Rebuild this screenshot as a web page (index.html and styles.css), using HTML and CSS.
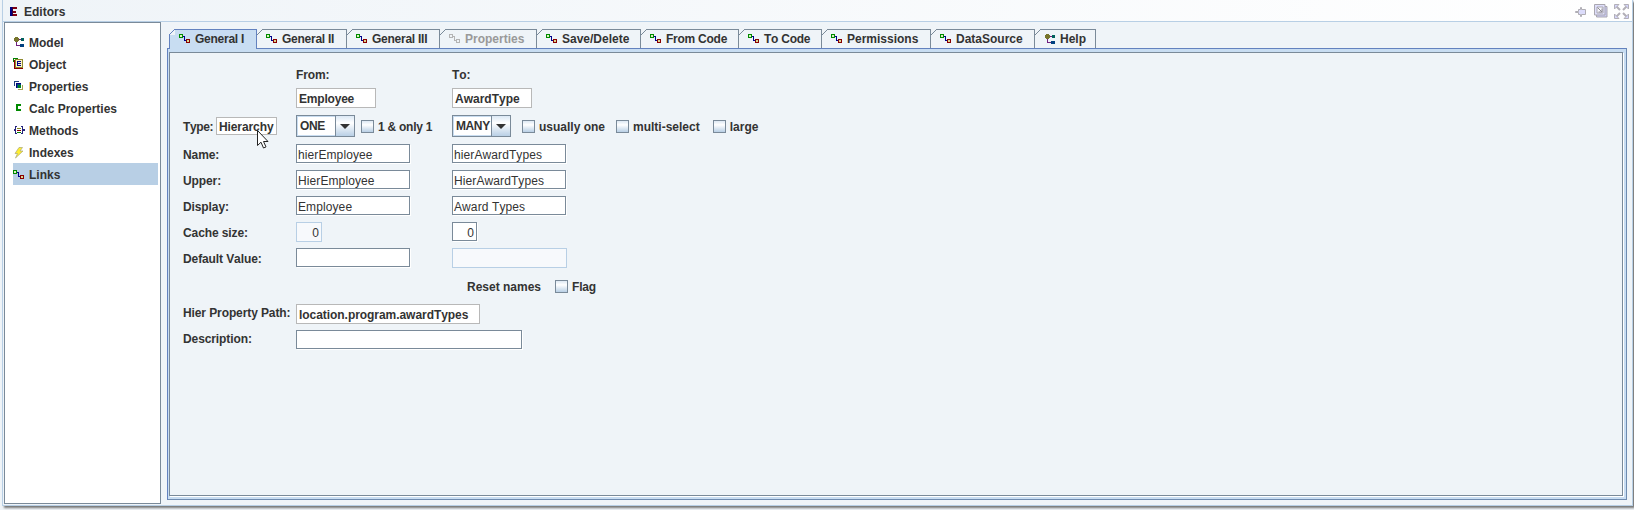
FILE: index.html
```html
<!DOCTYPE html>
<html lang="en">
<head>
<meta charset="utf-8">
<title>Editors</title>
<link rel="stylesheet" href="styles.css">
</head>
<body>
<svg class="defs" aria-hidden="true">
  <symbol id="link" viewBox="0 0 12 12"><path d="M.5.5h3v3h-3z" fill="#dff0c0" stroke="#008a00"/><path d="M4 2.500h1.500v4H7" fill="none" stroke="#00008a"/><path d="M7.500 5.500h3v3h-3z" fill="#d8d890" stroke="#8a0000"/></symbol>
  <symbol id="link-off" viewBox="0 0 12 12"><path d="M.5.5h3v3h-3zM4 2.500h1.500v4H7M7.500 5.500h3v3h-3z" fill="none" stroke="#b4b4b4"/></symbol>
  <symbol id="model" viewBox="0 0 12 12"><path d="M2 0h3v1h1v3H5v1H2V4H1V1h1z" fill="#77752c"/><path d="M6 2.500h2M3.500 5v3.500H7" fill="none" stroke="#702080"/><path d="M8 1h3v3H8z" fill="#00605c"/><path d="M7 7h4v3H7z" fill="#004080"/></symbol>
  <symbol id="object" viewBox="0 0 12 12"><path d="M2.500 1.500h7v8h-7z" fill="#fff6c4" stroke="#8f8a30"/><path d="M0 .5h5M.5 0v4" stroke="#008000"/><path d="M1.500 2v8.500H10" fill="none" stroke="#8a0000"/><path d="M8 3.500H4.500v4H8M4 5.500h4" fill="none" stroke="#00008a"/></symbol>
  <symbol id="props" viewBox="0 0 12 12"><path d="M1.500 5V.5H6" fill="none" stroke="#204080"/><path d="M3 2h5v5H3z" fill="#005078"/><path d="M5 4h3v3H5z" fill="#008020"/><path d="M9.500 4v4.500H5" fill="none" stroke="#a8a450"/><path d="M3.500 7V2.500H8" fill="none" stroke="#000080"/></symbol>
  <symbol id="calc" viewBox="0 0 12 12"><path d="M8 2H4v5h4" fill="none" stroke="#008a00" stroke-width="2"/></symbol>
  <symbol id="methods" viewBox="0 0 12 12"><path d="M4 1.500h-1.500v3H1v1h1.500v3H4M8 1.500h1.500v3H11v1H9.500v3H8" fill="none" stroke="#24247c"/><path d="M4 3.500h4" stroke="#8a8a20"/><path d="M4 5.500h4" stroke="#8a0000"/><path d="M4 7.500h4" stroke="#008000"/></symbol>
  <symbol id="bolt" viewBox="0 0 12 12"><path d="M6 .5h3.500L7 4h3L2.500 11l2-4.500H2z" fill="#ffee30" stroke="#a9a878" stroke-width=".7"/></symbol>
</svg>

<div class="window">
  <header class="titlebar">
    <svg class="logo" viewBox="0 0 8 9"><path d="M0 0h3v9H0z" fill="#000080"/><path d="M3 0h4v2H3zM3 3.500h3v2H3zM3 7h4v2H3z" fill="#800010"/><path d="M2 0h1v9H2z" fill="#30003c"/></svg>
    <h1 class="title">Editors</h1>
    <div class="controls">
      <svg class="ctl-pin" viewBox="0 0 12 10"><path d="M.5 4.500h3v-2h2v-2h1v2h4v5h-4v2h-1v-2h-2v-2h-3z" fill="#dcdcfb" stroke="#b0aeb5"/></svg>
      <svg class="ctl-restore" viewBox="0 0 14 14"><path d="M2.500 2.500h10.500v10.500H2.500z" fill="#c9c9f3" stroke="#aaa7b0"/><path d="M.5.5h10.500v10.500H.5z" fill="#dedefb" stroke="#aaa7b0"/><path d="M3 3h6v6H3z" fill="#f8f8ff" stroke="#aaa7b0"/><path d="M3.500 3.500 8 8M8 4.500V8H4.500" fill="none" stroke="#8d8a95"/></svg>
      <svg class="ctl-expand" viewBox="0 0 15 15"><path d="M1 1l5 5M14 1 9 6M1 14l5-5M14 14 9 9" fill="none" stroke="#b3b0b8" stroke-width="2"/><path d="M.5.5h4.500l-4.500 4.500zM14.500.5v4.500L10 .5zM.5 14.500V10L5 14.500zM14.500 14.500H10l4.500-4.500z" fill="#d4d4fa" stroke="#b3b0b8"/></svg>
    </div>
  </header>

  <div class="content">
    <nav class="tree">
      <div class="node"><svg class="icon"><use href="#model"/></svg><span>Model</span></div>
      <div class="node"><svg class="icon high"><use href="#object"/></svg><span>Object</span></div>
      <div class="node"><svg class="icon"><use href="#props"/></svg><span>Properties</span></div>
      <div class="node"><svg class="icon"><use href="#calc"/></svg><span>Calc Properties</span></div>
      <div class="node"><svg class="icon"><use href="#methods"/></svg><span>Methods</span></div>
      <div class="node"><svg class="icon smooth"><use href="#bolt"/></svg><span>Indexes</span></div>
      <div class="node selected"><svg class="icon"><use href="#link"/></svg><span>Links</span></div>
    </nav>

    <main class="editor">
      <div class="tabs">
        <div class="tab active snug w88"><svg class="corner" viewBox="0 0 6 6"><path d="M0 6 6 0"/></svg><svg class="icon"><use href="#link"/></svg><span>General I</span></div>
        <div class="tab snug w90"><svg class="corner" viewBox="0 0 6 6"><path d="M0 6 6 0"/></svg><svg class="icon"><use href="#link"/></svg><span>General II</span></div>
        <div class="tab snug w93"><svg class="corner" viewBox="0 0 6 6"><path d="M0 6 6 0"/></svg><svg class="icon"><use href="#link"/></svg><span>General III</span></div>
        <div class="tab w97 off"><svg class="corner" viewBox="0 0 6 6"><path d="M0 6 6 0"/></svg><svg class="icon"><use href="#link-off"/></svg><span>Properties</span></div>
        <div class="tab w104"><svg class="corner" viewBox="0 0 6 6"><path d="M0 6 6 0"/></svg><svg class="icon"><use href="#link"/></svg><span>Save/Delete</span></div>
        <div class="tab snug w98"><svg class="corner" viewBox="0 0 6 6"><path d="M0 6 6 0"/></svg><svg class="icon"><use href="#link"/></svg><span>From Code</span></div>
        <div class="tab snug w83"><svg class="corner" viewBox="0 0 6 6"><path d="M0 6 6 0"/></svg><svg class="icon"><use href="#link"/></svg><span>To Code</span></div>
        <div class="tab w109"><svg class="corner" viewBox="0 0 6 6"><path d="M0 6 6 0"/></svg><svg class="icon"><use href="#link"/></svg><span>Permissions</span></div>
        <div class="tab w104"><svg class="corner" viewBox="0 0 6 6"><path d="M0 6 6 0"/></svg><svg class="icon"><use href="#link"/></svg><span>DataSource</span></div>
        <div class="tab w61"><svg class="corner" viewBox="0 0 6 6"><path d="M0 6 6 0"/></svg><svg class="icon"><use href="#model"/></svg><span>Help</span></div>
      </div>

      <div class="frame"><div class="panel">
        <div class="row heads"><span></span><span>From:</span><span>To:</span></div>
        <div class="row entities"><span></span><div><span class="readonly short">Employee</span></div><div><span class="readonly short award">AwardType</span></div></div>
        <div class="row type">
          <div class="kind"><span class="kind-label">Type:</span><span class="readonly tight">Hierarchy</span>
            <svg class="cursor" viewBox="0 0 12 19"><path d="M.5.5v15l3.500-3.300 2.500 5.800 2.500-1.100-2.500-5.400H11z" fill="#fff" stroke="#222"/></svg>
          </div>
          <div class="choices"><div class="combo"><span>ONE</span><i><svg viewBox="0 0 10 5"><path d="M0 0h10L5 5z"/></svg></i></div><label class="check snug c1"><b></b>1 &amp; only 1</label></div>
          <div class="choices"><div class="combo"><span>MANY</span><i><svg viewBox="0 0 10 5"><path d="M0 0h10L5 5z"/></svg></i></div><label class="check c2"><b></b>usually one</label><label class="check c3"><b></b>multi-select</label><label class="check c4"><b></b>large</label></div>
        </div>
        <div class="row field"><span>Name:</span><div class="input">hierEmployee</div><div class="input">hierAwardTypes</div></div>
        <div class="row field"><span>Upper:</span><div class="input">HierEmployee</div><div class="input">HierAwardTypes</div></div>
        <div class="row field"><span>Display:</span><div class="input">Employee</div><div class="input">Award Types</div></div>
        <div class="row field"><span>Cache size:</span><div class="input number disabled">0</div><div class="input number">0</div></div>
        <div class="row field"><span>Default Value:</span><div class="input"></div><div class="input disabled"></div></div>
        <div class="row reset"><span></span><span></span><div class="choices"><span class="reset-label">Reset names</span><label class="check snug c5"><b></b>Flag</label></div></div>
        <div class="row lower"><span>Hier Property Path:</span><div><span class="readonly long">location.program.awardTypes</span></div></div>
        <div class="row lower"><span>Description:</span><div class="input wide"></div></div>
      </div></div>
    </main>
  </div>
</div>
</body>
</html>
```

FILE: styles.css
```css
* { box-sizing: border-box; }
body {
  margin: 0;
  height: 510px;
  overflow: hidden;
  padding-left: 2px;
  background: #eff4f8;
  color: #333;
  font: bold 12px/20px "Liberation Sans", Arial, sans-serif;
  font-kerning: none;
}
.defs { position: absolute; width: 0; height: 0; }
svg { display: block; flex: none; }
.icon { width: 12px; height: 12px; shape-rendering: crispEdges; }
.icon.smooth { shape-rendering: auto; }

.window {
  width: 1631px;
  height: 506px;
  border: solid #b8cfe5;
  border-width: 0 1px 1px;
  background: #eff4f8;
  box-shadow: 2px 2px 2px #777;
}
.titlebar {
  display: flex;
  height: 22px;
  padding: 0 3px 0 7px;
  border-bottom: 1px solid #b8cfe5;
  background: linear-gradient(90deg, #eff4f8, #fff);
}
.logo { width: 8px; height: 9px; margin-top: 7px; shape-rendering: crispEdges; }
.title { margin: 2px 0 0 6px; font-size: 12px; line-height: 20px; }
.controls { display: flex; margin-left: auto; }
.ctl-pin { width: 12px; height: 10px; margin-top: 7px; }
.ctl-restore { width: 14px; height: 14px; margin: 4px 6px 0 7px; }
.ctl-expand { width: 15px; height: 15px; margin-top: 4px; }

.content { display: flex; height: 483px; padding-left: 1px; }
.tree {
  width: 157px;
  height: 482px;
  padding: 8px 2px 0 8px;
  border: 1px solid #7a8a99;
  background: #fff;
}
.node { display: flex; height: 22px; gap: 4px; }
.node .icon { margin-top: 6px; }
.node .high { margin-top: 5px; }
.node span { line-height: 24px; }
.selected { background: #b8cfe5; }
.selected .icon { margin-top: 7px; }

.editor { width: 1460px; margin-left: 6px; padding-top: 7px; }
.tabs { display: flex; height: 19px; padding-left: 2px; }
.tab {
  position: relative;
  display: flex;
  height: 19px;
  padding-left: 9px;
  border-top: 1px solid #7a8a99;
  border-right: 1px solid #7a8a99;
}
.tab .icon { margin: 4px 4px 0 0; }
.tab span { line-height: 18px; }
.corner {
  position: absolute;
  left: 0;
  top: -1px;
  width: 6px;
  height: 6px;
  background: #eff4f8;
  fill: none;
  stroke: #7a8a99;
}
.tab.active {
  z-index: 1;
  height: 20px;
  border-color: #6382bf;
  border-left: 1px solid #6382bf;
  background: #c8ddf2;
}
.active .corner { left: -1px; stroke: #6382bf; }
.off { color: #999; }
.snug { letter-spacing: -.25px; }
.w88 { width: 88px; }
.w90 { width: 90px; }
.w93 { width: 93px; }
.w97 { width: 97px; }
.w104 { width: 104px; }
.w98 { width: 98px; }
.w83 { width: 83px; }
.w109 { width: 109px; }
.w61 { width: 61px; }

.frame {
  height: 452px;
  padding: 3px 3px 3px 1px;
  border: 1px solid #6382bf;
  border-right-color: #6f8bb0;
  border-bottom-color: #6f8bb0;
  background: #c8ddf2;
}
.panel {
  height: 444px;
  padding: 12px 0 0 13px;
  border: 1px solid #7a8a99;
  background: #eff4f8;
  box-shadow: 1px 1px #fff;
}
.row {
  display: grid;
  grid-template-columns: 113px 156px auto;
  height: 26px;
}
.row > span { letter-spacing: -.1px; }
.heads { height: 23px; }
.entities { height: 27px; }
.type { height: 29px; }
.reset { height: 30px; }
.field > span { padding-top: 1px; }
.lower > span { line-height: 18px; }

.readonly {
  display: block;
  height: 20px;
  padding-left: 2px;
  border: 1px solid #b8b8b8;
  background: #fff;
}
.short { width: 80px; letter-spacing: -.2px; }
.award { letter-spacing: 0; }
.long { width: 184px; letter-spacing: -.05px; }
.tight { width: 61px; height: 18px; letter-spacing: -.1px; line-height: 18px; }
.kind { position: relative; display: flex; height: 20px; margin-top: 2px; }
.kind-label { width: 33px; letter-spacing: -.4px; }
.cursor { position: absolute; left: 74px; top: 13px; width: 12px; height: 19px; }

.choices { display: flex; }
.combo {
  display: flex;
  width: 59px;
  height: 22px;
  border: 1px solid #7a8a99;
  background: #fff;
  box-shadow: inset 0 0 0 1px #c8dcf0;
}
.combo span { width: 38px; padding-left: 3px; line-height: 21px; letter-spacing: -.4px; }
.combo i {
  width: 19px;
  padding: 8px 0 0 4px;
  border-left: 1px solid #7a8a99;
  background: linear-gradient(#dbe8f5, #fff 35%, #b8cfe5);
}
.combo svg { width: 10px; height: 5px; fill: #333; }
.check { display: flex; gap: 4px; height: 20px; margin-top: 2px; }
.check b {
  width: 13px;
  height: 13px;
  margin-top: 3px;
  border: 1px solid #7a8a99;
  background: linear-gradient(#dde8f3, #fff 35%, #b8cfe5);
}
.c1 { margin-left: 6px; }
.c2 { margin-left: 11px; }
.c3 { margin-left: 11px; }
.c4 { margin-left: 13px; }

.input {
  width: 114px;
  height: 19px;
  padding-left: 1px;
  border: 1px solid #7a8a99;
  background: #fff;
  box-shadow: 1px 1px #fff;
  font-weight: normal;
  letter-spacing: .1px;
  line-height: 20px;
}
.disabled {
  width: 115px;
  height: 20px;
  border-color: #b8cfe5;
  background: #f7f9fc;
  box-shadow: none;
}
.number { width: 25px; padding-right: 2px; text-align: right; }
.number.disabled { width: 26px; }
.wide { width: 226px; }
.reset-label { margin: 3px 0 0 15px; }
.c5 { margin: 3px 0 0 14px; }
```
